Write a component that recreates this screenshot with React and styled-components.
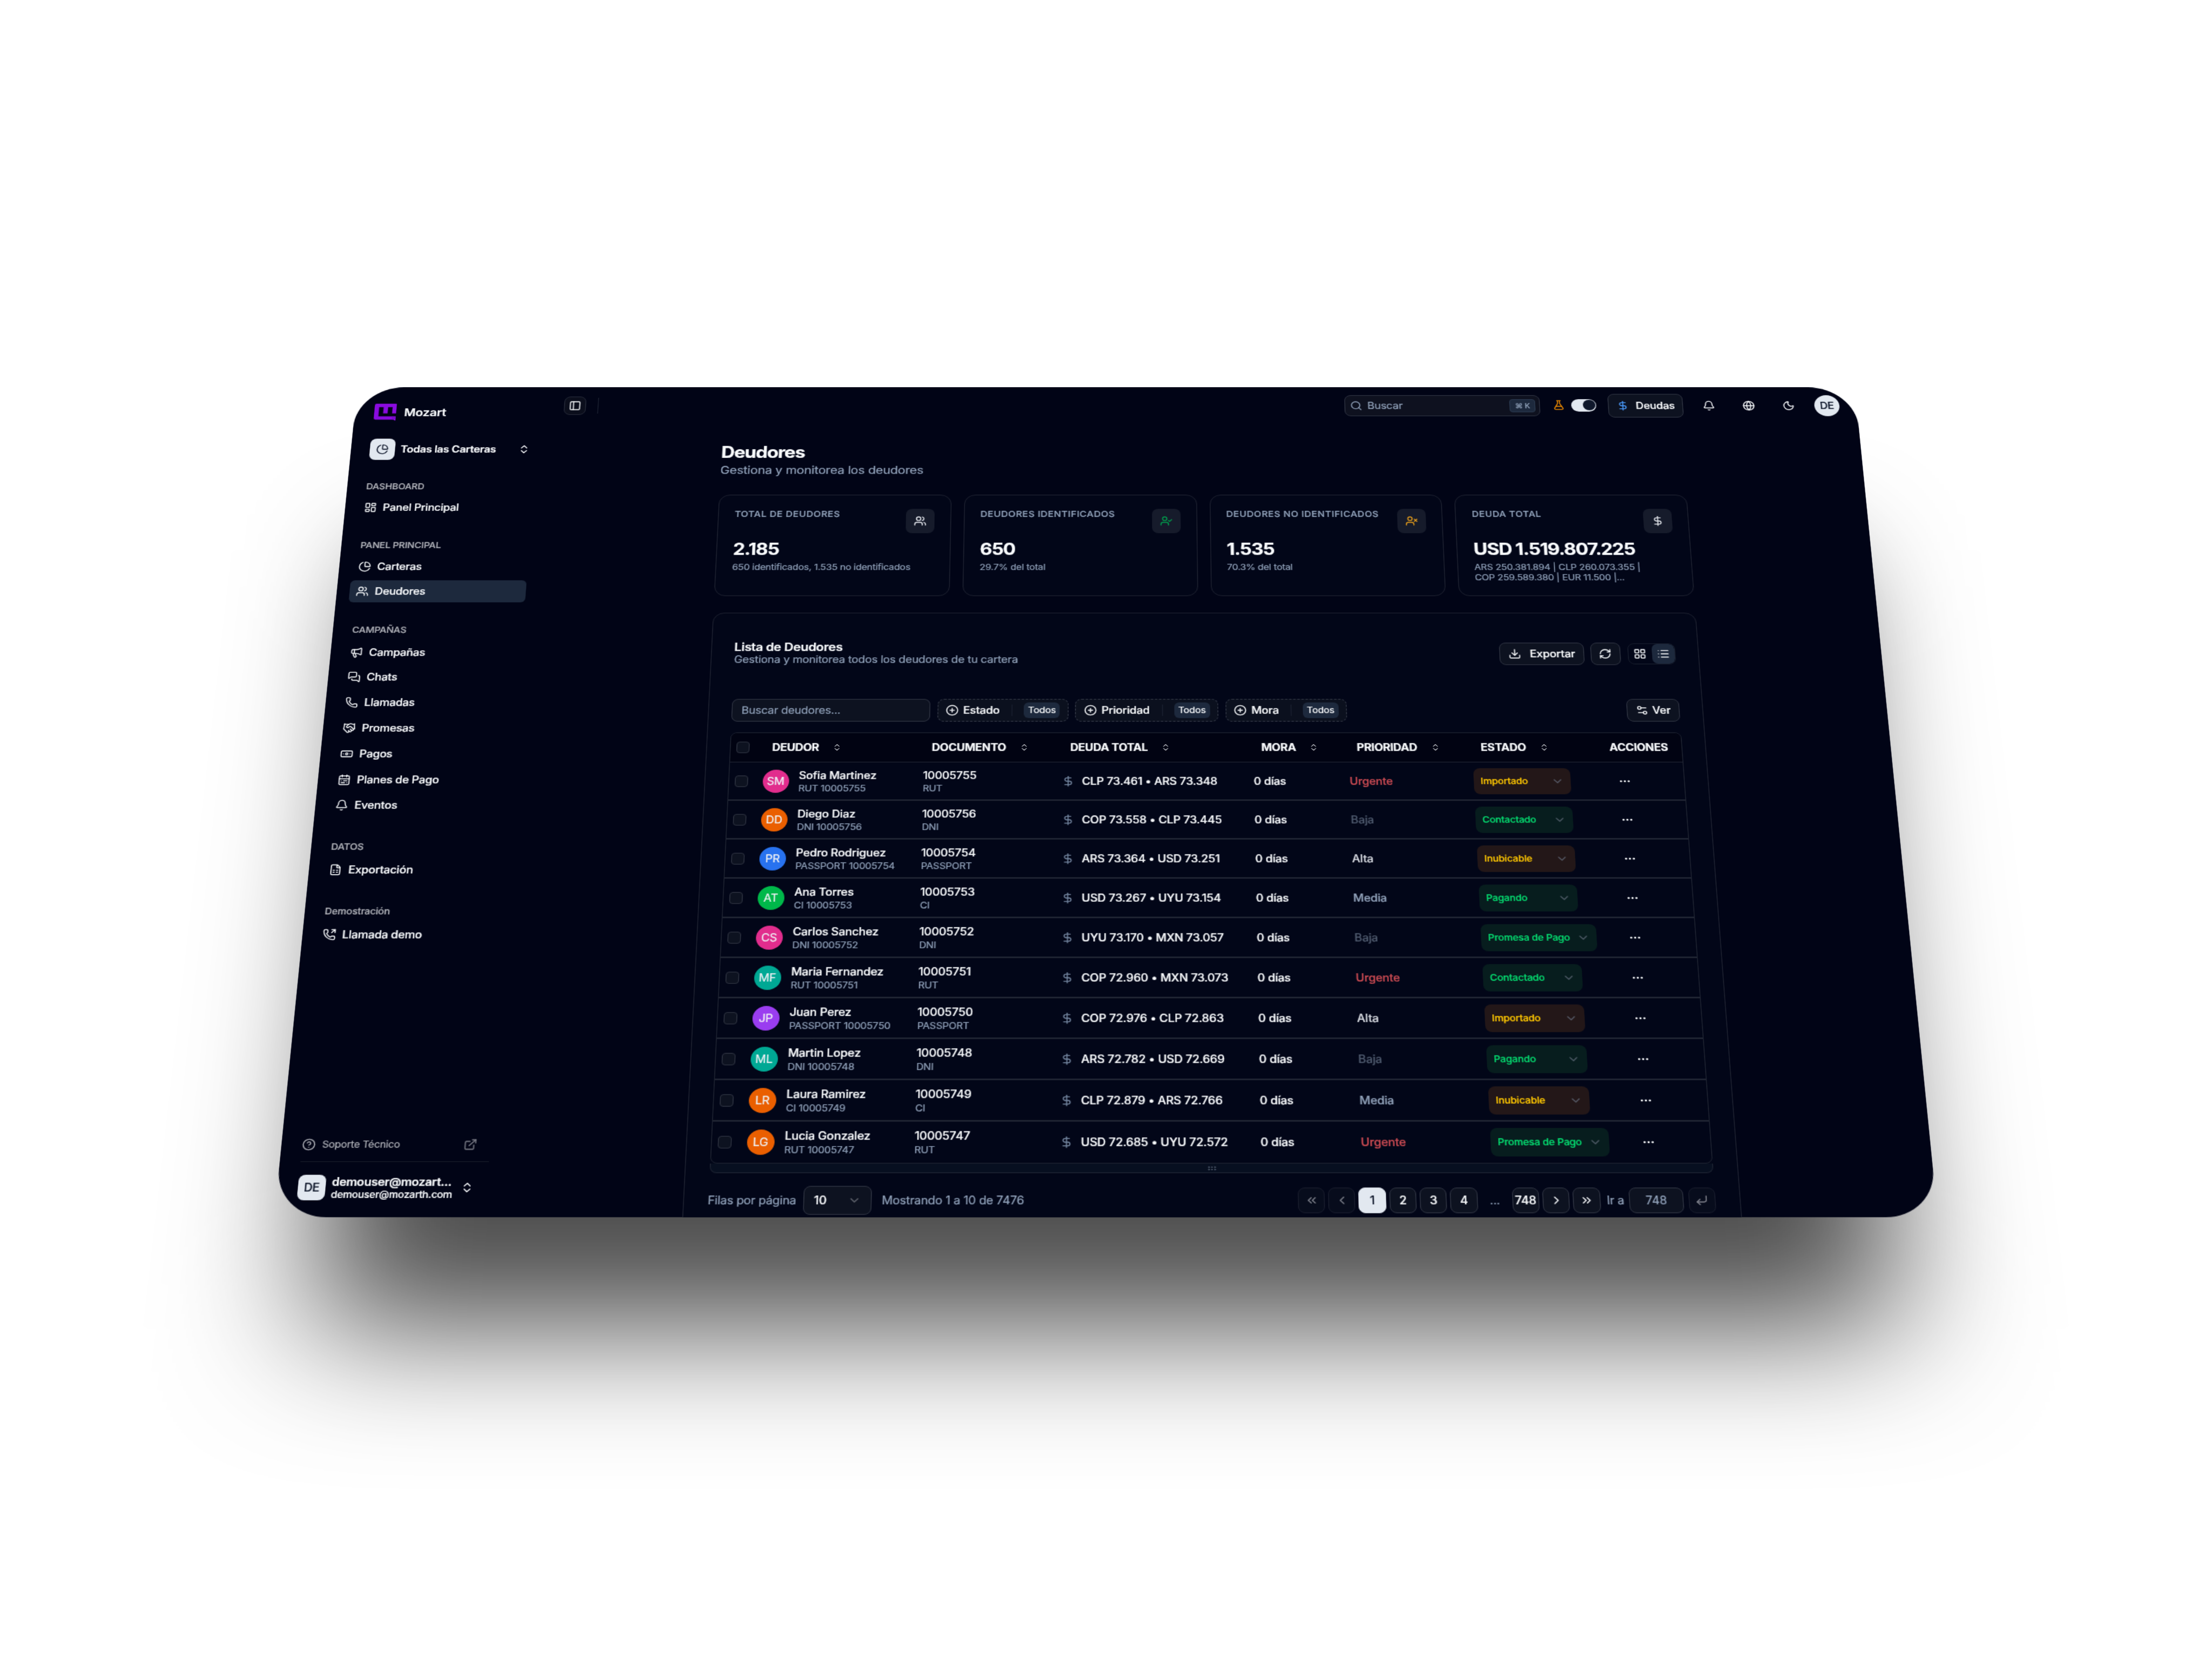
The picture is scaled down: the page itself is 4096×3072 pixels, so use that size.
import React from 'react';
import styled, { createGlobalStyle } from 'styled-components';
import {
  Banknote, Bell, CalendarRange, ChartPie, ChevronDown, ChevronLeft, ChevronRight,
  ChevronsLeft, ChevronsRight, ChevronsUpDown, CirclePlus, CircleQuestionMark,
  CornerDownLeft, DollarSign, Download, Ellipsis, ExternalLink, FileSpreadsheet,
  FlaskConical, Globe, GripHorizontal, Handshake, LayoutDashboard, LayoutGrid, List,
  Megaphone, MessagesSquare, Moon, PanelLeft, Phone, PhoneOutgoing, RefreshCw, Search,
  Settings2, UserCheck, UserX, Users,
} from 'lucide-react';

const GlobalStyle = createGlobalStyle`
  * { box-sizing: border-box; }
  html, body { margin: 0; padding: 0; background: #fff; }
  body { font-family: Inter, 'Liberation Sans', sans-serif; overflow: hidden; }
  svg { flex-shrink: 0; display: block; }
`;

const Stage = styled.div`
  width: 4096px;
  height: 3072px;
  overflow: hidden;
  background: #fff;
`;

// The whole window is tilted backwards around its horizontal axis
const Screen = styled.div`
  width: 1920px;
  height: 1144px;
  display: flex;
  overflow: hidden;
  border-radius: 60px;
  background: #010416;
  color: #f8fafc;
  font-size: 14px;
  line-height: 20px;
  letter-spacing: -0.012em;
  -webkit-text-stroke: 0.2px currentColor;
  box-shadow: 0 190px 160px -54px rgba(0, 0, 0, 0.7);
  transform-origin: 0 0;
  transform: matrix3d(
    1.44434, 0, 0, 0,
    -0.178606, 1.14667, 0, -0.00008721,
    0, 0, 1, 0,
    661.4, 717.3, 0, 1
  );
`;

/* ---------- Sidebar ---------- */

const Sidebar = styled.aside`
  width: 252px;
  flex-shrink: 0;
  display: flex;
  flex-direction: column;
  padding: 22px 16px 13px;
`;

const Brand = styled.div`
  display: flex;
  align-items: center;
  gap: 10px;
  height: 31px;
  padding-left: 8.6px;
  font-size: 16px;
  font-weight: 600;
`;

const Switcher = styled.div`
  display: flex;
  align-items: center;
  height: 48px;
  margin-top: 17px;
  padding: 0 8px;
  font-weight: 600;
  letter-spacing: -0.25px;
`;

const SquareBadge = styled.span`
  width: 32px;
  height: 32px;
  flex-shrink: 0;
  margin-right: 7px;
  border-radius: 8px;
  display: flex;
  align-items: center;
  justify-content: center;
  background: #e2e8f0;
  color: #0f172b;
  font-weight: 500;
`;

const Grow = styled.div`
  flex: 1;
  min-width: 0;
`;

const Groups = styled.nav`
  margin-top: 7.6px;
  flex: 1;
`;

const Group = styled.div`
  padding: 8px 0;
  margin-bottom: 8px;
`;

const GroupLabel = styled.div`
  height: 31.4px;
  padding: 1px 8px 0;
  display: flex;
  align-items: center;
  font-size: 12px;
  font-weight: 500;
  color: #aeb0b7;
`;

const GroupItems = styled.div`
  display: flex;
  flex-direction: column;
  gap: 3.8px;
`;

const NavItem = styled.div`
  height: 32px;
  padding: 0 8px;
  display: flex;
  align-items: center;
  gap: 7.5px;
  border-radius: 6px;
  font-weight: 500;
  letter-spacing: -0.22px;
  background: ${props => props.$active ? '#1d293d' : 'transparent'};
`;

const Support = styled.div`
  display: flex;
  align-items: center;
  gap: 7.5px;
  height: 43px;
  padding: 0 8px;
  font-size: 12px;
  color: #aeb0b7;

  svg:last-child { opacity: 0.7; }
`;

const Rule = styled.div`
  height: 1px;
  width: 219px;
  margin-left: 8px;
  background: #171b29;
`;

const UserRow = styled.div`
  display: flex;
  align-items: center;
  height: 48px;
  margin-top: 8px;
  padding: 0 8px;
`;

const UserName = styled.div`
  font-weight: 600;
  line-height: 17px;
  letter-spacing: -0.25px;
`;

const UserMail = styled.div`
  font-size: 12px;
  font-weight: 500;
  line-height: 15px;
  letter-spacing: -0.26px;
`;

/* ---------- Top bar ---------- */

const Main = styled.main`
  flex: 1;
  min-width: 0;
  display: flex;
  flex-direction: column;
`;

const TopBar = styled.header`
  height: 55px;
  flex-shrink: 0;
  display: flex;
  align-items: center;
  padding: 0 22px 0 15px;
`;

const TopActions = styled.div`
  margin-left: auto;
  display: flex;
  align-items: center;
  gap: 14.9px;
`;

const ToggleButton = styled.div`
  width: 28px;
  height: 28px;
  border-radius: 8px;
  border: 1px solid #262a39;
  background: #0b0e1c;
  display: flex;
  align-items: center;
  justify-content: center;
`;

const VerticalLine = styled.span`
  width: 1px;
  height: ${props => props.$height || 16}px;
  margin-left: ${props => props.$left || 0}px;
  background: #1a2030;
`;

const SearchBox = styled.div`
  width: 250px;
  height: 32px;
  margin-right: 1.2px;
  display: flex;
  align-items: center;
  gap: 6px;
  padding: 0 5px 0 6px;
  border-radius: 8px;
  border: 1px solid #2e3241;
  background: #0e111f;
  color: #90a1b9;
`;

const Kbd = styled.kbd`
  margin-left: auto;
  width: 33px;
  height: 20px;
  border-radius: 4px;
  border: 1px solid #2b3a50;
  background: #1d293d;
  display: flex;
  align-items: center;
  justify-content: center;
  font: 500 10px Inter, 'DejaVu Sans', sans-serif;
`;

const DemoSwitch = styled.div`
  display: flex;
  align-items: center;
  gap: 7.4px;
  margin-right: 0.8px;
  color: #f08c00;
`;

const SwitchTrack = styled.span`
  width: 32px;
  height: 18.4px;
  padding: 1px;
  border-radius: 10px;
  display: flex;
  justify-content: flex-end;
  align-items: center;
  background: #e2e8f0;
`;

const SwitchThumb = styled.span`
  width: 16px;
  height: 16px;
  border-radius: 50%;
  background: #0f172b;
`;

const Button = styled.div`
  height: ${props => props.$height || 32}px;
  width: ${props => props.$width ? `${props.$width}px` : 'auto'};
  display: flex;
  align-items: center;
  justify-content: center;
  gap: ${props => props.$gap || 6}px;
  border-radius: 8px;
  border: 1px solid #2e3341;
  background: #0d1220;
  font-weight: 500;
`;

const IconSlot = styled.span`
  width: 36px;
  height: 36px;
  display: flex;
  align-items: center;
  justify-content: center;
`;

const Avatar = styled.span`
  width: 32px;
  height: 32px;
  flex-shrink: 0;
  border-radius: 50%;
  display: flex;
  align-items: center;
  justify-content: center;
  background: ${props => props.$color || '#e2e8f0'};
  color: ${props => props.$color ? '#eef0f4' : '#0f172b'};
  font-weight: ${props => props.$color ? 400 : 500};
`;

/* ---------- Content ---------- */

const Content = styled.div`
  width: 1223px;
  margin-left: 219px;
  padding-top: 29px;
`;

const Title = styled.h1`
  margin: 0;
  font-size: 24px;
  line-height: 29px;
  font-weight: 700;
  letter-spacing: -0.88px;
`;

const Subtitle = styled.p`
  margin: 0;
  font-size: 16px;
  line-height: 24px;
  color: #90a1b9;
`;

const Cards = styled.div`
  display: grid;
  grid-template-columns: repeat(4, 1fr);
  gap: 16px;
  margin-top: 25px;
`;

const Card = styled.div`
  height: 149px;
  padding: 20px;
  border-radius: 14px;
  border: 1px solid #1d2130;
  background: #020618;
`;

const CardHead = styled.div`
  display: flex;
  justify-content: space-between;
  height: 45px;
`;

const CardLabel = styled.span`
  font-size: 12px;
  line-height: 16px;
  font-weight: 500;
  letter-spacing: 0.4px;
  color: #90a1b9;
`;

const CardIcon = styled.span`
  width: 36px;
  height: 36px;
  border-radius: 8px;
  display: flex;
  align-items: center;
  justify-content: center;
  background: #161b2b;
  color: ${props => props.$color};
`;

const CardValue = styled.div`
  font-size: 24px;
  line-height: 29px;
  font-weight: 700;
  letter-spacing: -0.92px;
  margin-bottom: 4px;
`;

const CardNote = styled.div`
  font-size: 12px;
  line-height: 15px;
  color: #90a1b9;
  white-space: pre-line;
`;

const ListCard = styled.section`
  height: 860px;
  margin-top: 24px;
  padding: 42px 28px 0;
  border-radius: 14px;
  border: 1px solid #1d2130;
  background: #020618;
`;

const ListHead = styled.div`
  display: flex;
  justify-content: space-between;
  height: 80px;
`;

const ListTitle = styled.div`
  font-size: 16px;
  line-height: 16px;
  font-weight: 600;
  letter-spacing: -0.3px;
  margin: -2.4px 0 0.8px -0.5px;
`;

const Muted = styled.div`
  color: #90a1b9;
`;

const ViewToggle = styled.div`
  width: 59px;
  height: 30px;
  margin: 1px 0 0 2px;
  display: flex;
  border-radius: 8px;
  border: 1px solid #171d2c;
  overflow: hidden;
`;

const ViewOption = styled.span`
  flex: 1;
  display: flex;
  align-items: center;
  justify-content: center;
  border-radius: 7px;
  background: ${props => props.$active ? '#1d293d' : 'transparent'};
`;

const Row = styled.div`
  display: flex;
  align-items: ${props => props.$align || 'center'};
  gap: ${props => props.$gap}px;
`;

const SearchInput = styled.div`
  width: 244px;
  height: 32px;
  display: flex;
  align-items: center;
  padding: 0 11px;
  border-radius: 8px;
  border: 1px solid #2e3341;
  background: #0d1220;
  color: #90a1b9;
`;

const FilterButton = styled.div`
  width: ${props => props.$width}px;
  height: 32px;
  display: flex;
  align-items: center;
  padding: 0 9.5px;
  border-radius: 8px;
  border: 1px dashed #363b49;
  background: #0b101e;
  font-weight: 500;
`;

const FilterText = styled.span`
  margin-left: 5.5px;
  flex: 1;
`;

const FilterBadge = styled.span`
  height: 22px;
  width: 44px;
  margin-left: 14px;
  border-radius: 6px;
  display: flex;
  align-items: center;
  justify-content: center;
  background: #1d293d;
  font-size: 12px;
  font-weight: 400;
`;

/* ---------- Table ---------- */

const Table = styled.div`
  margin-top: 15.4px;
  border: 1px solid #1e2331;
  border-radius: 8px;
  overflow: hidden;
`;

const TableRow = styled.div`
  display: grid;
  grid-template-columns: 32.7px 195.2px 169.4px 233.8px 116.8px 151.5px 167.5px 1fr;
  align-items: center;
  height: 53px;
  padding-top: 1.4px;
  border-bottom: 2px solid #212634;

  &:last-child { border-bottom: 0; height: 52px; padding: 0; }
`;

const TableHead = styled(TableRow)`
  height: 40.5px;
  padding: 0;
  background: #010312;
  border-bottom: 1px solid #1f2332;
  font-weight: 700;
  letter-spacing: -0.27px;
`;

const HeadCell = styled.div`
  display: flex;
  align-items: center;
  gap: 16px;
  padding-left: ${props => props.$plain ? 8 : 18}px;
`;

const Cell = styled.div`
  display: flex;
  align-items: center;
  padding-left: 8px;
  font-weight: 500;
  white-space: nowrap;
`;

const Checkbox = styled.span`
  width: 16px;
  height: 16px;
  margin-left: -0.8px;
  border-radius: 4px;
  border: 1px solid #2e3341;
  background: #0d1220;
`;

const Stack = styled.div`
  margin-left: ${props => props.$left || 0}px;
`;

const Small = styled.div`
  font-size: 12px;
  line-height: 16px;
  font-weight: 400;
  color: #90a1b9;
`;

const Amount = styled.span`
  margin-left: 8.5px;
`;

const Priority = styled.span`
  color: ${props => props.$color};
`;

const StatusSelect = styled.div`
  min-width: 118px;
  height: 36px;
  padding: 0 8px;
  border-radius: 8px;
  display: flex;
  align-items: center;
  justify-content: space-between;
  gap: 8px;
  font-size: 12px;
  background: ${props => props.$tone === 'green' ? '#071d1e' : '#231718'};
  color: ${props => props.$tone === 'green' ? '#05dc70' : '#ffc700'};

  svg { color: #66707f; opacity: 0.75; }
`;

const Dots = styled.span`
  width: 32px;
  display: flex;
  justify-content: center;
`;

const ScrollStrip = styled.div`
  height: 12.3px;
  border: 1px solid #1e2433;
  border-top: 0;
  border-radius: 0 0 8px 8px;
  background: #070f20;
  display: flex;
  align-items: center;
  justify-content: center;
  color: #5a6678;
`;

/* ---------- Pagination ---------- */

const Footer = styled.div`
  display: flex;
  align-items: center;
  justify-content: space-between;
  margin: 15.5px 0 0 -0.6px;
`;

const PageSize = styled.div`
  width: 79px;
  height: 36px;
  margin: 0 11.5px 0 8.5px;
  padding: 0 11px;
  display: flex;
  align-items: center;
  justify-content: space-between;
  border-radius: 8px;
  border: 1px solid #2e3341;
  background: #0d1220;
  font-weight: 500;

  svg { opacity: 0.35; }
`;

const PageButton = styled.span`
  width: ${props => props.$width || 31.3}px;
  height: 32px;
  display: flex;
  align-items: center;
  justify-content: center;
  border-radius: 8px;
  border: 1px solid ${props => props.$current ? '#e2e8f0' : '#2e3341'};
  background: ${props => props.$current ? '#e2e8f0' : '#0d1220'};
  color: ${props => props.$current ? '#0f172b' : props.$muted ? '#90a1b9' : '#f8fafc'};
  opacity: ${props => props.$disabled ? 0.5 : 1};
  font-weight: ${props => props.$muted ? 400 : 500};
`;

const PageGap = styled.span`
  width: 32px;
  text-align: center;
  color: #90a1b9;
`;

const GoTo = styled.span`
  margin: 0 2px 0 3.6px;
  color: #90a1b9;
`;

const NAV = [
  { label: 'DASHBOARD', items: [[LayoutDashboard, 'Panel Principal']] },
  { label: 'PANEL PRINCIPAL', items: [[ChartPie, 'Carteras'], [Users, 'Deudores', true]] },
  {
    label: 'CAMPAÑAS',
    items: [
      [Megaphone, 'Campañas'],
      [MessagesSquare, 'Chats'],
      [Phone, 'Llamadas'],
      [Handshake, 'Promesas'],
      [Banknote, 'Pagos'],
      [CalendarRange, 'Planes de Pago'],
      [Bell, 'Eventos'],
    ],
  },
  { label: 'DATOS', items: [[FileSpreadsheet, 'Exportación']] },
  { label: 'Demostración', items: [[PhoneOutgoing, 'Llamada demo']] },
];

const CARDS = [
  { label: 'TOTAL DE DEUDORES', value: '2.185', note: '650 identificados, 1.535 no identificados', icon: Users, color: '#e6e9ef' },
  { label: 'DEUDORES IDENTIFICADOS', value: '650', note: '29.7% del total', icon: UserCheck, color: '#009c4c' },
  { label: 'DEUDORES NO IDENTIFICADOS', value: '1.535', note: '70.3% del total', icon: UserX, color: '#e09a1c' },
  {
    label: 'DEUDA TOTAL',
    value: 'USD 1.519.807.225',
    note: 'ARS 250.381.894 | CLP 260.073.355 |\nCOP 259.589.380 | EUR 11.500 |...',
    icon: DollarSign,
    color: '#e6e9ef',
  },
];

const FILTERS = [['Estado', 161.4], ['Prioridad', 175.8], ['Mora', 149.6]];

const COLUMNS = ['DEUDOR', 'DOCUMENTO', 'DEUDA TOTAL', 'MORA', 'PRIORIDAD', 'ESTADO'];

const PRIORITY_COLORS = {
  Urgente: '#c94a52',
  Alta: '#d5d8df',
  Media: '#90a1b9',
  Baja: '#4d586c',
};

const STATUS_TONES = {
  Importado: 'amber',
  Inubicable: 'amber',
  Contactado: 'green',
  Pagando: 'green',
  'Promesa de Pago': 'green',
};

const DEBTORS = [
  ['SM', '#e12d8d', 'Sofia Martinez', 'RUT', '10005755', 'CLP 73.461 • ARS 73.348', 'Urgente', 'Importado'],
  ['DD', '#ea5f00', 'Diego Diaz', 'DNI', '10005756', 'COP 73.558 • CLP 73.445', 'Baja', 'Contactado'],
  ['PR', '#2872ef', 'Pedro Rodriguez', 'PASSPORT', '10005754', 'ARS 73.364 • USD 73.251', 'Alta', 'Inubicable'],
  ['AT', '#00b84a', 'Ana Torres', 'CI', '10005753', 'USD 73.267 • UYU 73.154', 'Media', 'Pagando'],
  ['CS', '#e12d8d', 'Carlos Sanchez', 'DNI', '10005752', 'UYU 73.170 • MXN 73.057', 'Baja', 'Promesa de Pago'],
  ['MF', '#00a894', 'Maria Fernandez', 'RUT', '10005751', 'COP 72.960 • MXN 73.073', 'Urgente', 'Contactado'],
  ['JP', '#9a3df0', 'Juan Perez', 'PASSPORT', '10005750', 'COP 72.976 • CLP 72.863', 'Alta', 'Importado'],
  ['ML', '#00a894', 'Martin Lopez', 'DNI', '10005748', 'ARS 72.782 • USD 72.669', 'Baja', 'Pagando'],
  ['LR', '#ea5f00', 'Laura Ramirez', 'CI', '10005749', 'CLP 72.879 • ARS 72.766', 'Media', 'Inubicable'],
  ['LG', '#ea5f00', 'Lucia Gonzalez', 'RUT', '10005747', 'USD 72.685 • UYU 72.572', 'Urgente', 'Promesa de Pago'],
];

function Logo() {
  return (
    <svg width="28.6" height="26" viewBox="0 0 30 26" preserveAspectRatio="none">
      <path
        fill="#8a0be0"
        d="M2.4 0h25.2A2.4 2.4 0 0 1 30 2.4V14.8H24V5.2H18V14.8H12V5.2H6V19.2H30V25.6Q28 25.6 26.6 24.2H2.4A2.4 2.4 0 0 1 0 21.8V2.4A2.4 2.4 0 0 1 2.4 0Z"
      />
      <circle cx="25.2" cy="21.6" r="0.7" fill="#3c0a6b" />
      <circle cx="27.4" cy="21.6" r="0.7" fill="#3c0a6b" />
    </svg>
  );
}

function SidebarPanel() {
  return (
    <Sidebar>
      <Brand>
        <Logo />
        Mozart
      </Brand>
      <Switcher>
        <SquareBadge><ChartPie size={16} /></SquareBadge>
        <Grow>Todas las Carteras</Grow>
        <ChevronsUpDown size={16} />
      </Switcher>
      <Groups>
        {NAV.map(group => (
          <Group key={group.label}>
            <GroupLabel>{group.label}</GroupLabel>
            <GroupItems>
              {group.items.map(([Icon, label, active]) => (
                <NavItem key={label} $active={active}>
                  <Icon size={16} />
                  {label}
                </NavItem>
              ))}
            </GroupItems>
          </Group>
        ))}
      </Groups>
      <Support>
        <CircleQuestionMark size={16} />
        <Grow>Soporte Técnico</Grow>
        <ExternalLink size={16} />
      </Support>
      <Rule />
      <UserRow>
        <SquareBadge>DE</SquareBadge>
        <Grow>
          <UserName>demouser@mozart...</UserName>
          <UserMail>demouser@mozarth.com</UserMail>
        </Grow>
        <ChevronsUpDown size={16} />
      </UserRow>
    </Sidebar>
  );
}

function Header() {
  return (
    <TopBar>
      <ToggleButton><PanelLeft size={16} /></ToggleButton>
      <VerticalLine $height={24} $left={15} />
      <TopActions>
        <SearchBox>
          <Search size={16} />
          Buscar
          <Kbd>⌘ K</Kbd>
        </SearchBox>
        <DemoSwitch>
          <FlaskConical size={16} />
          <SwitchTrack><SwitchThumb /></SwitchTrack>
        </DemoSwitch>
        <Button $width={96} $height={36} $gap={8}>
          <DollarSign size={16} color="#4a9cff" />
          Deudas
        </Button>
        <IconSlot><Bell size={16} /></IconSlot>
        <IconSlot><Globe size={16} /></IconSlot>
        <IconSlot><Moon size={16} /></IconSlot>
        <Avatar>DE</Avatar>
      </TopActions>
    </TopBar>
  );
}

function DebtorRow({ debtor }) {
  const [initials, color, name, docType, docNumber, amount, priority, status] = debtor;

  return (
    <TableRow>
      <Cell><Checkbox /></Cell>
      <Cell>
        <Avatar $color={color}>{initials}</Avatar>
        <Stack $left={12}>
          <div>{name}</div>
          <Small>{docType} {docNumber}</Small>
        </Stack>
      </Cell>
      <Cell>
        <Stack>
          <div>{docNumber}</div>
          <Small>{docType}</Small>
        </Stack>
      </Cell>
      <Cell>
        <DollarSign size={16} color="#7486a0" />
        <Amount>{amount}</Amount>
      </Cell>
      <Cell>0 días</Cell>
      <Cell><Priority $color={PRIORITY_COLORS[priority]}>{priority}</Priority></Cell>
      <Cell>
        <StatusSelect $tone={STATUS_TONES[status]}>
          {status}
          <ChevronDown size={16} />
        </StatusSelect>
      </Cell>
      <Cell><Dots><Ellipsis size={16} /></Dots></Cell>
    </TableRow>
  );
}

function Pagination() {
  return (
    <Footer>
      <Row $gap={0}>
        <Muted>Filas por página</Muted>
        <PageSize>10 <ChevronDown size={16} /></PageSize>
        <Muted>Mostrando 1 a 10 de 7476</Muted>
      </Row>
      <Row $gap={4}>
        <PageButton $disabled><ChevronsLeft size={16} /></PageButton>
        <PageButton $disabled><ChevronLeft size={16} /></PageButton>
        <PageButton $current>1</PageButton>
        <PageButton>2</PageButton>
        <PageButton>3</PageButton>
        <PageButton>4</PageButton>
        <PageGap>...</PageGap>
        <PageButton>748</PageButton>
        <PageButton><ChevronRight size={16} /></PageButton>
        <PageButton><ChevronsRight size={16} /></PageButton>
        <GoTo>Ir a</GoTo>
        <Row $gap={6}>
          <PageButton $width={62.4} $muted>748</PageButton>
          <PageButton $disabled><CornerDownLeft size={16} /></PageButton>
        </Row>
      </Row>
    </Footer>
  );
}

function DebtorList() {
  return (
    <ListCard>
      <ListHead>
        <div>
          <ListTitle>Lista de Deudores</ListTitle>
          <Muted>Gestiona y monitorea todos los deudores de tu cartera</Muted>
        </div>
        <Row $gap={7.5} $align="flex-start">
          <Button $width={105.5} $gap={11}><Download size={16} />Exportar</Button>
          <Button $width={37}><RefreshCw size={16} /></Button>
          <ViewToggle>
            <ViewOption><LayoutGrid size={16} /></ViewOption>
            <ViewOption $active><List size={16} /></ViewOption>
          </ViewToggle>
        </Row>
      </ListHead>
      <Row $gap={8.5}>
        <SearchInput>Buscar deudores...</SearchInput>
        {FILTERS.map(([label, width]) => (
          <FilterButton key={label} $width={width}>
            <CirclePlus size={16} />
            <FilterText>{label}</FilterText>
            <VerticalLine />
            <FilterBadge>Todos</FilterBadge>
          </FilterButton>
        ))}
        <Grow />
        <Button $width={65.5} $gap={5}><Settings2 size={16} />Ver</Button>
      </Row>
      <Table>
        <TableHead>
          <HeadCell $plain><Checkbox /></HeadCell>
          {COLUMNS.map(column => (
            <HeadCell key={column}>
              {column}
              <ChevronsUpDown size={12} />
            </HeadCell>
          ))}
          <HeadCell $plain>ACCIONES</HeadCell>
        </TableHead>
        {DEBTORS.map(debtor => (
          <DebtorRow key={debtor[4]} debtor={debtor} />
        ))}
      </Table>
      <ScrollStrip><GripHorizontal size={12} /></ScrollStrip>
      <Pagination />
    </ListCard>
  );
}

function App() {
  return (
    <Stage>
      <GlobalStyle />
      <Screen>
        <SidebarPanel />
        <Main>
          <Header />
          <Content>
            <Title>Deudores</Title>
            <Subtitle>Gestiona y monitorea los deudores</Subtitle>
            <Cards>
              {CARDS.map(({ label, value, note, icon: Icon, color }) => (
                <Card key={label}>
                  <CardHead>
                    <CardLabel>{label}</CardLabel>
                    <CardIcon $color={color}><Icon size={16} /></CardIcon>
                  </CardHead>
                  <CardValue>{value}</CardValue>
                  <CardNote>{note}</CardNote>
                </Card>
              ))}
            </Cards>
            <DebtorList />
          </Content>
        </Main>
      </Screen>
    </Stage>
  );
}

export default App;
